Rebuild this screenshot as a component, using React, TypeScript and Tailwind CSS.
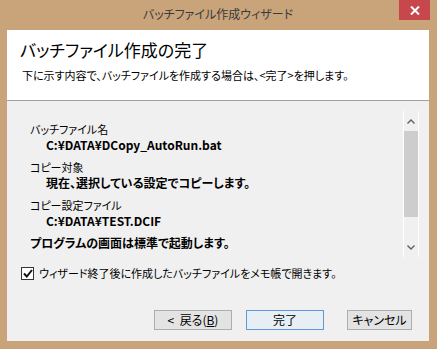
import React, { useState } from 'react';

const jp = "font-['Meiryo_UI','Noto_Sans_CJK_JP',sans-serif] [font-feature-settings:'palt']";

const Scrollbar: React.FC = () => (
  <div className="flex w-[16px] flex-col items-center border-x border-white bg-[#f0f0f0]">
    <div className="flex h-[20px] w-full items-center justify-center">
      <svg width="8" height="5" viewBox="0 0 8 5">
        <path d="M0.5 4.5 L4 1 L7.5 4.5" fill="none" stroke="#606060" strokeWidth="1.4" />
      </svg>
    </div>
    <div className="h-[86px] w-[14px] bg-[#cdcdcd]" />
    <div className="flex-1" />
    <div className="flex h-[20px] w-full items-center justify-center">
      <svg width="8" height="5" viewBox="0 0 8 5">
        <path d="M0.5 0.5 L4 4 L7.5 0.5" fill="none" stroke="#606060" strokeWidth="1.4" />
      </svg>
    </div>
  </div>
);

const Button: React.FC<{ label: React.ReactNode; primary?: boolean; width: string }> = ({ label, primary, width }) => (
  <button
    className={`flex h-[20px] ${width} items-center justify-center border text-[12px] text-black ${
      primary ? 'border-[#5d9ad6] bg-[#e8eef5]' : 'border-[#adadad] bg-[#e3e3e3]'
    }`}
  >
    {label}
  </button>
);

const App: React.FC = () => {
  const [openNotepad, setOpenNotepad] = useState(true);

  return (
    <div className={`flex h-[349px] w-[437px] flex-col bg-[#c9a47b] px-[7px] pb-[8px] pr-[8px] ${jp}`}>
      {/* title bar */}
      <div className="relative flex h-[30px] items-center justify-center">
        <span className="pb-[2px] text-[12px] text-[#3a3a3a]">バッチファイル作成ウィザード</span>
        <div className="absolute -right-[1px] top-0 flex h-[20px] w-[31px] items-center justify-center bg-[#c7474c]">
          <svg width="10" height="9" viewBox="0 0 10 9">
            <path d="M1 0.5 L9 8.5 M9 0.5 L1 8.5" stroke="white" strokeWidth="2" />
          </svg>
        </div>
      </div>

      <div className="flex flex-1 flex-col bg-[#f0f0f0]">
        {/* header */}
        <div className="h-[71px] border-b border-[#a0a0a0] bg-white pl-[13px] pt-[8px]">
          <div className="text-[17px] leading-[24px] text-black">バッチファイル作成の完了</div>
          <div className="mt-[5px] pl-[2px] text-[11px] leading-[16px] text-black">
            下に示す内容で、バッチファイルを作成する場合は、&lt;完了&gt;を押します。
          </div>
        </div>

        {/* summary list */}
        <div className="mt-[10px] flex h-[146px] pr-[10px]">
          <div className="flex-1 pl-[23px] pt-[10px] text-[12px] leading-[16px] text-black">
            <div className="text-[11px]">バッチファイル名</div>
            <div className="pl-[16px] font-bold">C:¥DATA¥DCopy_AutoRun.bat</div>
            <div className="mt-[6px] text-[11px]">コピー対象</div>
            <div className="pl-[16px] font-bold">現在、選択している設定でコピーします。</div>
            <div className="mt-[6px] text-[11px]">コピー設定ファイル</div>
            <div className="pl-[16px] font-bold">C:¥DATA¥TEST.DCIF</div>
            <div className="mt-[6px] font-bold">プログラムの画面は標準で起動します。</div>
          </div>
          <Scrollbar />
        </div>

        {/* checkbox */}
        <label className="mt-[8px] flex items-center gap-[5px] pl-[14px] text-[11px] text-black">
          <span
            onClick={() => setOpenNotepad(!openNotepad)}
            className="flex h-[13px] w-[13px] items-center justify-center border border-[#333] bg-white"
          >
            {openNotepad && (
              <svg width="10" height="9" viewBox="0 0 10 9">
                <path d="M1 4.5 L3.8 7.5 L9 1" fill="none" stroke="#111" strokeWidth="2" />
              </svg>
            )}
          </span>
          ウィザード終了後に作成したバッチファイルをメモ帳で開きます。
        </label>

        {/* buttons */}
        <div className="mt-[28px] flex pl-[147px]">
          <Button width="w-[78px]" label={<span>&lt;&nbsp;&nbsp;戻る(<span className="underline">B</span>)</span>} />
          <div className="w-[14px]" />
          <Button width="w-[78px]" primary label="完了" />
          <div className="w-[23px]" />
          <Button width="w-[65px]" label="キャンセル" />
        </div>
      </div>
    </div>
  );
};

export default App;
